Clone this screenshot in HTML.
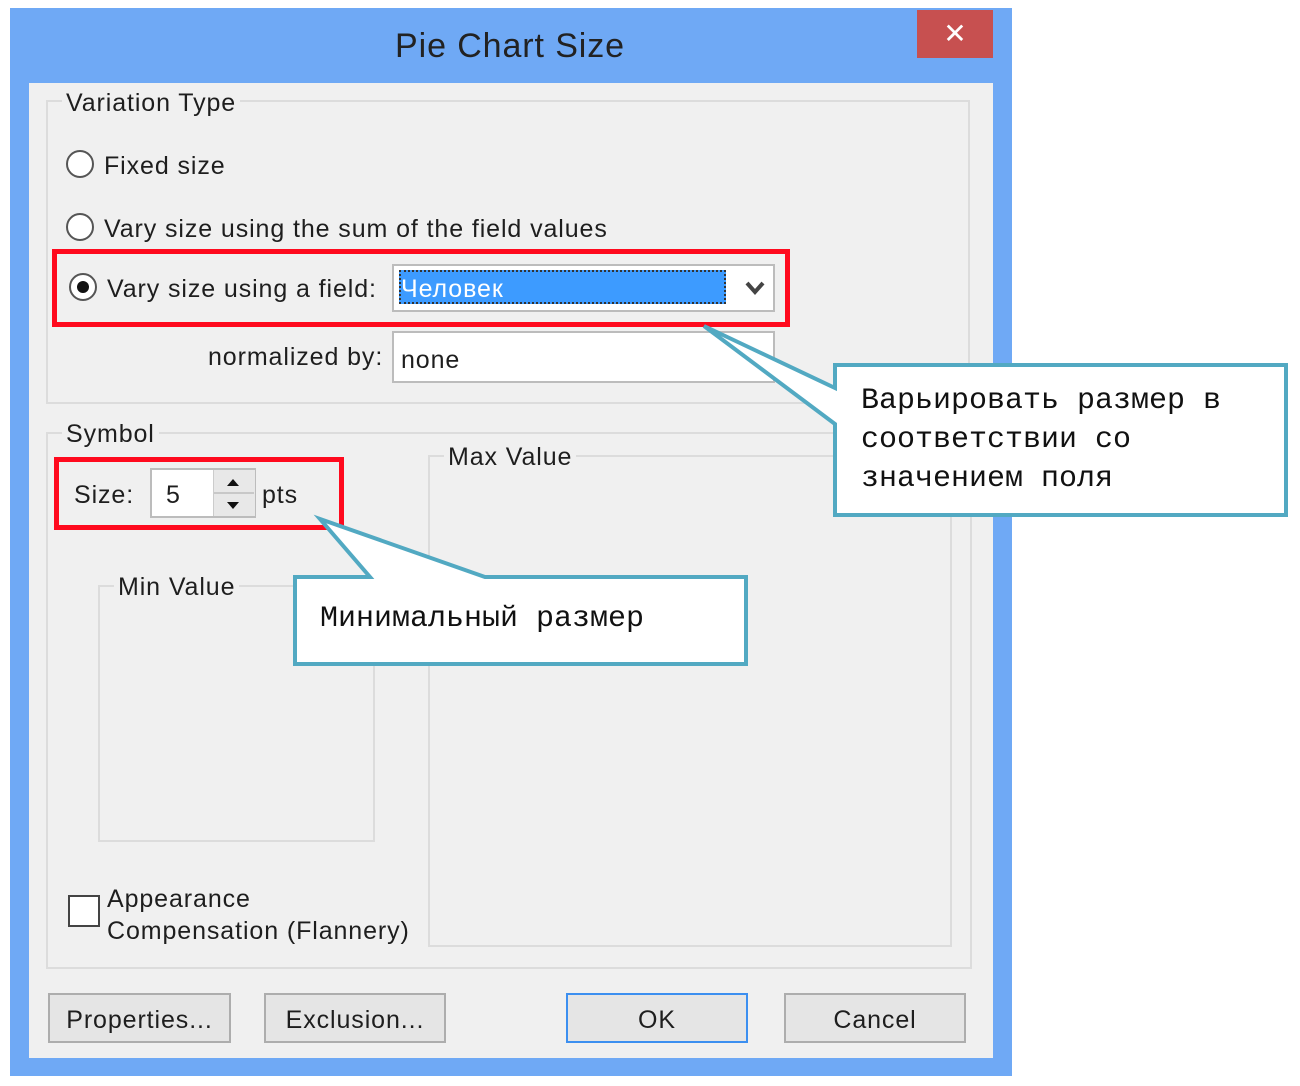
<!DOCTYPE html>
<html><head><meta charset="utf-8"><style>
body{margin:0;width:1300px;height:1086px;background:#fff;position:relative;overflow:hidden;font-family:"Liberation Sans","DejaVu Sans",sans-serif;color:#1e1e1e}
.a{position:absolute}
.t{position:absolute;font-size:25px;letter-spacing:0.9px;white-space:nowrap;line-height:28px}
.grp{position:absolute;border:2px solid #dcdcdc}
.lbl{position:absolute;background:#f0f0f0;padding:0 4px;font-size:25px;letter-spacing:0.9px;line-height:28px;white-space:nowrap}
.radio{position:absolute;width:28px;height:28px;border-radius:50%;border:2px solid #555;background:#fff;box-sizing:border-box}
.btn{position:absolute;top:993px;height:50px;border:2px solid #adadad;background:#e5e5e5;box-sizing:border-box;font-size:25px;letter-spacing:0.9px;line-height:50px;text-align:center}
.mono{font-family:"Liberation Mono","DejaVu Sans Mono",monospace;font-size:30px;line-height:39px;color:#111}
</style></head><body>
<div class="a" style="left:10px;top:8px;width:1002px;height:1068px;background:#6fa9f5"></div>
<div class="a" style="left:917px;top:10px;width:76px;height:48px;background:#c75050;color:#fff;font-size:28px;text-align:center;line-height:48px;font-weight:bold">✕</div>
<div class="t" style="left:0;top:26px;width:1020px;text-align:center;font-size:34px;line-height:40px;color:#222">Pie Chart Size</div>
<div class="a" style="left:29px;top:83px;width:964px;height:975px;background:#f0f0f0"></div>

<div class="grp" style="left:46px;top:100px;width:920px;height:300px"></div>
<div class="lbl" style="left:62px;top:89px">Variation Type</div>
<div class="radio" style="left:66px;top:150px"></div>
<div class="t" style="left:104px;top:152px">Fixed size</div>
<div class="radio" style="left:66px;top:213px"></div>
<div class="t" style="left:104px;top:215px">Vary size using the sum of the field values</div>
<div class="radio" style="left:69px;top:273px"><div class="a" style="left:6px;top:6px;width:12px;height:12px;border-radius:50%;background:#111"></div></div>
<div class="t" style="left:107px;top:275px">Vary size using a field:</div>
<div class="a" style="left:392px;top:264px;width:383px;height:48px;border:2px solid #bcbcbc;background:#fff;box-sizing:border-box"></div>
<div class="a" style="left:399px;top:270px;width:327px;height:34px;background:#3d9bff;border:2px dotted #333;box-sizing:border-box"></div>
<div class="t" style="left:401px;top:275px;color:#fff">Человек</div>
<svg class="a" style="left:744px;top:280px" width="22" height="16"><path d="M3 3 L11 12 L19 3" stroke="#444" stroke-width="4" fill="none"/></svg>
<div class="t" style="left:208px;top:343px">normalized by:</div>
<div class="a" style="left:392px;top:331px;width:383px;height:52px;border:2px solid #bcbcbc;background:#fff;box-sizing:border-box"></div>
<div class="t" style="left:401px;top:346px">none</div>
<div class="a" style="left:52px;top:249px;width:738px;height:78px;border:5px solid #ff0a1e;box-sizing:border-box"></div>

<div class="grp" style="left:46px;top:432px;width:922px;height:533px"></div>
<div class="lbl" style="left:62px;top:420px">Symbol</div>
<div class="t" style="left:74px;top:481px">Size:</div>
<div class="a" style="left:150px;top:468px;width:106px;height:50px;border:2px solid #bcbcbc;background:#fff;box-sizing:border-box"></div>
<div class="t" style="left:166px;top:481px">5</div>
<div class="a" style="left:213px;top:470px;width:41px;height:46px;background:#e8e8e8;border-left:1px solid #ccc"></div>
<div class="a" style="left:214px;top:492px;width:40px;height:2px;background:#c8c8c8"></div>
<svg class="a" style="left:224px;top:475px" width="18" height="40"><path d="M3 11 L9 4 L15 11Z M3 27 L9 34 L15 27Z" fill="#111"/></svg>
<div class="t" style="left:262px;top:481px">pts</div>
<div class="a" style="left:54px;top:457px;width:290px;height:73px;border:5px solid #ff0a1e;box-sizing:border-box"></div>

<div class="grp" style="left:428px;top:455px;width:520px;height:488px"></div>
<div class="lbl" style="left:444px;top:443px">Max Value</div>
<div class="grp" style="left:98px;top:585px;width:273px;height:253px"></div>
<div class="lbl" style="left:114px;top:573px">Min Value</div>

<div class="a" style="left:68px;top:895px;width:32px;height:32px;border:2px solid #444;background:#fff;box-sizing:border-box"></div>
<div class="t" style="left:107px;top:885px">Appearance</div>
<div class="t" style="left:107px;top:917px">Compensation (Flannery)</div>

<div class="btn" style="left:48px;width:183px">Properties...</div>
<div class="btn" style="left:264px;width:182px">Exclusion...</div>
<div class="btn" style="left:566px;width:182px;border-color:#3c8ff0">OK</div>
<div class="btn" style="left:784px;width:182px">Cancel</div>

<svg class="a" style="left:0;top:0" width="1300" height="1086">
<path d="M835 365 L1286 365 L1286 515 L835 515 L835 424 L704 326 L835 388 Z" fill="#fff" stroke="#52a9c2" stroke-width="4" stroke-linejoin="miter"/>
<path d="M295 577 L370 577 L320 519 L485 577 L746 577 L746 664 L295 664 Z" fill="#fff" stroke="#52a9c2" stroke-width="4"/>
</svg>
<div class="a mono" style="left:861px;top:382px;white-space:pre">Варьировать размер в
соответствии со
значением поля</div>
<div class="a mono" style="left:320px;top:600px;white-space:pre">Минимальный размер</div>
</body></html>
